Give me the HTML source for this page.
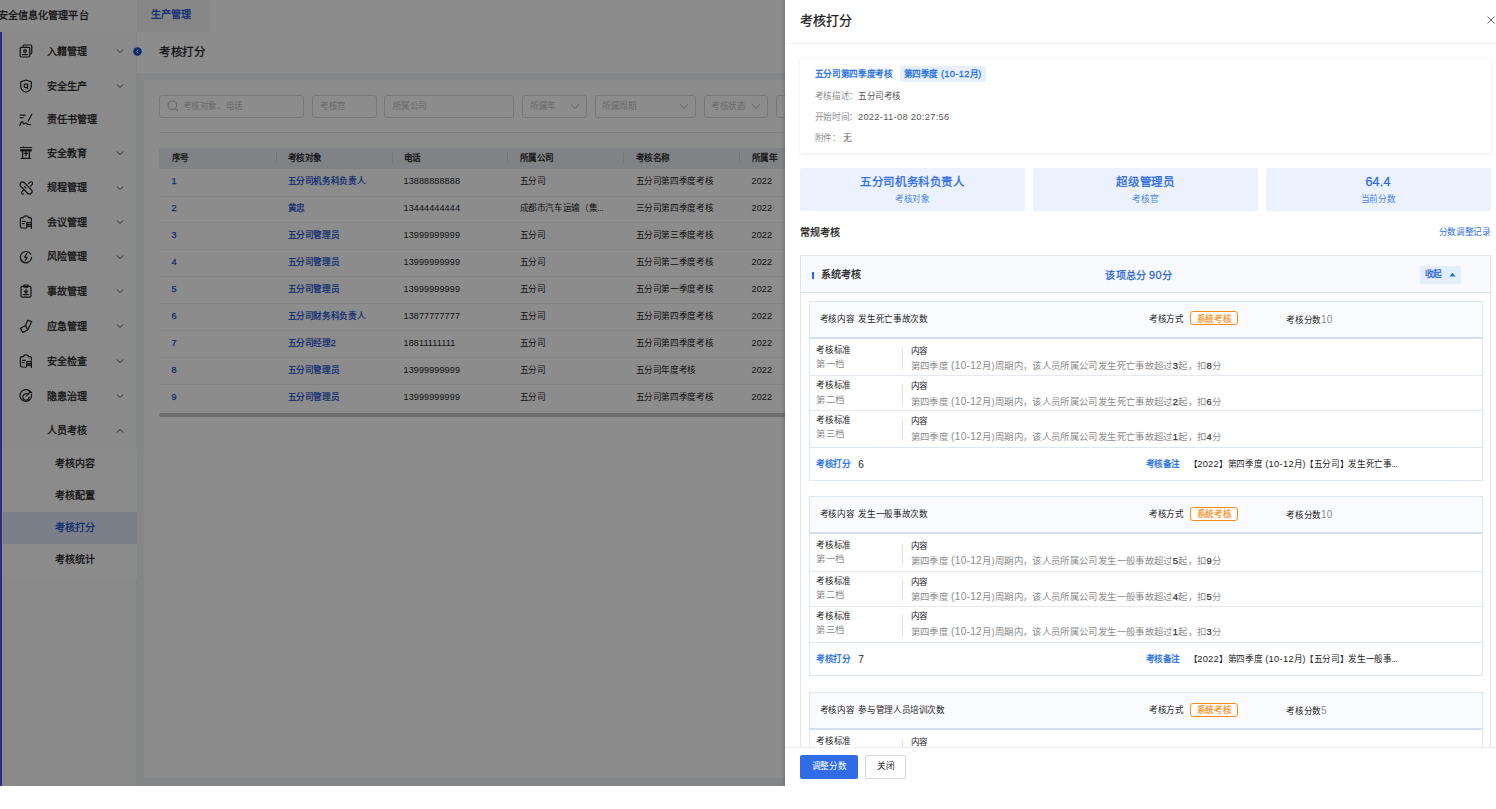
<!DOCTYPE html><html lang="zh-CN"><head><meta charset="utf-8"><style>
*{box-sizing:border-box;margin:0;padding:0}
html,body{width:1496px;height:809px;overflow:hidden;background:#fff;font-family:"Liberation Sans",sans-serif;color:#262626}
.a{position:absolute;white-space:nowrap}
#app{position:absolute;left:0;top:0;width:1496px;height:786px;background:#f0f2f5;overflow:hidden}
.top{left:0;top:0;width:1496px;height:32px;background:#fff;box-shadow:0 1px 2px rgba(0,0,0,.12)}
.logo{left:-2.1px;top:-0.2px;-webkit-text-stroke:0.4px;line-height:32px;font-size:10.08px;letter-spacing:0.08px;font-weight:400;-webkit-text-stroke:0.28px;color:#1f1f1f}
.tab{left:137px;top:0;width:73px;height:32px;background:#f4f4f4}
.tabt{left:151.2px;top:-1px;line-height:32px;color:#1a50d0;font-size:10.08px;letter-spacing:0.08px;font-weight:400;-webkit-text-stroke:0.28px}
.side{left:0;top:32px;width:137px;height:754px;background:#fcfcfc;border-right:1px solid #f0f0f0}
.strip{left:0;top:32px;width:2.4px;height:754px;background:#5252f2}
.mt{font-size:10.08px;letter-spacing:0.08px;color:#1f1f1f;font-weight:400;-webkit-text-stroke:0.28px;line-height:14px}
.sub{left:2.6px;top:448.5px;width:134px;height:130.5px;background:#fefefe}
.sel{left:2.6px;top:512px;width:134px;height:32px;background:#dfe8fa}
.ph{left:137px;top:32px;width:1359px;height:41px;background:#fff}
.ptitle{left:159px;top:44px;font-size:11.52px;letter-spacing:-0.48px;font-weight:400;-webkit-text-stroke:0.28px;color:#1f1f1f;line-height:16px}
.card{left:144px;top:80px;width:1352px;height:698px;background:#fff}
.inp{position:absolute;top:95px;height:23px;border:1px solid #d9d9d9;border-radius:3px;background:#fff}
.ph2{position:absolute;top:100px;font-size:8.64px;letter-spacing:-0.36px;color:#bfbfbf;line-height:13px}
.divl{left:159px;top:132px;width:1337px;height:1px;background:#e8e8e8}
.th{left:159px;top:147.5px;width:1337px;height:21px;background:#e9edf3}
.thc{top:151.5px;line-height:13px;font-size:8.64px;letter-spacing:-0.36px;font-weight:400;-webkit-text-stroke:0.28px;color:#262626}
.thsep{top:153px;width:1px;height:10px;background:#d3d8e0}
.rb{left:159px;width:1337px;height:1px;background:#eeeeee}
.td{line-height:13px;font-size:8.64px;letter-spacing:-0.36px;color:#262626}
.bl{color:#1a50d0;-webkit-text-stroke:0.25px}
.scroll{left:159px;top:412.5px;width:1337px;height:4.5px;background:#c6c6c6;border-radius:3px}
#mask{position:absolute;left:0;top:0;width:1496px;height:786px;background:rgba(0,0,0,.45)}

.bt{font-size:8.64px;letter-spacing:-0.36px;font-weight:400;-webkit-text-stroke:0.28px;color:#1f6fe0;line-height:13px}
.dt{font-size:8.64px;letter-spacing:-0.36px;color:#595959;line-height:13px}
.lb{color:#8c8c8c}
.st{font-size:11.52px;letter-spacing:-0.48px;font-weight:400;-webkit-text-stroke:0.28px;color:#2b6ae3;line-height:16px;text-align:center}
.ss{font-size:8.64px;letter-spacing:-0.36px;color:#4a86e8;line-height:13px;text-align:center}
.dk{font-size:8.64px;letter-spacing:-0.36px;color:#262626;line-height:13px}
.gr{font-size:8.64px;letter-spacing:-0.36px;color:#8c8c8c;line-height:13px}
.l{font-size:1.05em;letter-spacing:0.1px}
#dr .l{font-size:1.08em;letter-spacing:0.3px}
#dr .n{color:#333;-webkit-text-stroke:0.25px}
#dr .n .l{font-size:1em;letter-spacing:0.4px}
#dr{position:absolute;left:785px;top:0;width:711px;height:786px;background:#fff;overflow:hidden}
</style></head><body>
<div id="app">
<div class="a top"></div><div class="a logo">安全信息化管理平台</div><div class="a tab"></div><div class="a tabt">生产管理</div>
<div class="a side"></div><div class="a sub"></div><div class="a sel"></div><div class="a strip"></div>
<div class="a mt" style="left:47px;top:44.8px">入籍管理</div>
<svg class="a" style="left:19.2px;top:44px" width="14" height="14" viewBox="0 0 14 14" fill="none" stroke="#222" stroke-width="1.2" stroke-linecap="round" stroke-linejoin="round"><path d="M4 2.6V2.2C4 1.5 4.5 1 5.2 1H11.6C12.3 1 12.8 1.5 12.8 2.2V8.6C12.8 9.3 12.3 9.8 11.6 9.8H11.2"/><rect x="1.2" y="3.4" width="9.6" height="9.6" rx="1.2"/><circle cx="6" cy="7" r="1.3"/><path d="M3.6 10.6H8.4"/></svg>
<svg class="a" style="left:116px;top:48px" width="8" height="6" viewBox="0 0 8 6"><path d="M1 1.5L4 4.5L7 1.5" fill="none" stroke="#555" stroke-width="1"/></svg>
<div class="a mt" style="left:47px;top:79.8px">安全生产</div>
<svg class="a" style="left:19.2px;top:79px" width="14" height="14" viewBox="0 0 14 14" fill="none" stroke="#222" stroke-width="1.2" stroke-linecap="round" stroke-linejoin="round"><path d="M7 1L12.3 2.9V7.3C12.3 10.2 10 12.2 7 13.2C4 12.2 1.7 10.2 1.7 7.3V2.9Z"/><circle cx="7" cy="6.8" r="1.9"/><path d="M7.6 8.4L8.6 9.6"/></svg>
<svg class="a" style="left:116px;top:83px" width="8" height="6" viewBox="0 0 8 6"><path d="M1 1.5L4 4.5L7 1.5" fill="none" stroke="#555" stroke-width="1"/></svg>
<div class="a mt" style="left:47px;top:113.3px">责任书管理</div>
<svg class="a" style="left:19.2px;top:112.5px" width="14" height="14" viewBox="0 0 14 14" fill="none" stroke="#222" stroke-width="1.2" stroke-linecap="round" stroke-linejoin="round"><path d="M1 2.2H6.2M1.2 4.6H4.2M12.8 1.2L9.2 8.2M0.8 12.6C1.6 10.4 2.6 8.2 3.4 8.8C4.2 9.4 4.2 11.6 5.2 10.8C6.2 10 6.6 9.2 7.4 10.4C8.2 11.6 9 11.8 11.4 11.6"/></svg>
<div class="a mt" style="left:47px;top:146.8px">安全教育</div>
<svg class="a" style="left:19.2px;top:146px" width="14" height="14" viewBox="0 0 14 14" fill="none" stroke="#222" stroke-width="1.2" stroke-linecap="round" stroke-linejoin="round"><path d="M1.2 1.6H12.8M3.6 1.6C3.8 0.6 5.4 0.6 5.6 1.6" stroke-width="1"/><rect x="1.2" y="3.2" width="11.6" height="2.2" fill="#222" stroke="none"/><path d="M3.6 5.4V11M7 5.4V9.6M10.4 5.4V11M5.4 7.4H8.6M2.4 12.4H11.6" stroke-width="1.3"/></svg>
<svg class="a" style="left:116px;top:150px" width="8" height="6" viewBox="0 0 8 6"><path d="M1 1.5L4 4.5L7 1.5" fill="none" stroke="#555" stroke-width="1"/></svg>
<div class="a mt" style="left:47px;top:181.3px">规程管理</div>
<svg class="a" style="left:19.2px;top:180.5px" width="14" height="14" viewBox="0 0 14 14" fill="none" stroke="#222" stroke-width="1.2" stroke-linecap="round" stroke-linejoin="round"><rect x="-0.4" y="4.4" width="14.8" height="5.2" rx="2.6" transform="rotate(45 7 7)"/><path d="M9.6 2.6L10.8 1.4C11.6 0.6 12.6 0.6 13.2 1.2C13.8 1.8 13.8 2.8 13 3.6L11.6 5M4.4 9.2L3.2 10.4C2.4 11.2 2.4 12.2 3 12.8C3.4 13.2 4 13.2 4.6 12.8M5.6 5.6L6.8 6.8"/></svg>
<svg class="a" style="left:116px;top:184.5px" width="8" height="6" viewBox="0 0 8 6"><path d="M1 1.5L4 4.5L7 1.5" fill="none" stroke="#555" stroke-width="1"/></svg>
<div class="a mt" style="left:47px;top:215.8px">会议管理</div>
<svg class="a" style="left:19.2px;top:215px" width="14" height="14" viewBox="0 0 14 14" fill="none" stroke="#222" stroke-width="1.2" stroke-linecap="round" stroke-linejoin="round"><path d="M4.4 2.6H2.8C2 2.6 1.4 3.2 1.4 4V11.6C1.4 12.4 2 13 2.8 13H5.6M4.4 2.6C4.6 1.2 5.6 0.8 7 0.8C8.4 0.8 9.4 1.2 9.6 2.6H11C11.8 2.6 12.4 3.2 12.4 4V6.2M3.6 6.4H6.4M3.6 8.6H5.2M7.8 7.6H12.4V13.4M7.8 7.6V11.2C7.8 12.4 7.4 13 6.8 13.4M7.8 9.6H12.4M7.8 11.4H12.4"/></svg>
<svg class="a" style="left:116px;top:219px" width="8" height="6" viewBox="0 0 8 6"><path d="M1 1.5L4 4.5L7 1.5" fill="none" stroke="#555" stroke-width="1"/></svg>
<div class="a mt" style="left:47px;top:250.3px">风险管理</div>
<svg class="a" style="left:19.2px;top:249.5px" width="14" height="14" viewBox="0 0 14 14" fill="none" stroke="#222" stroke-width="1.2" stroke-linecap="round" stroke-linejoin="round"><path d="M11.8 4.2A5.6 5.6 0 1 0 12.6 7.4M1.6 9.4A5.6 5.6 0 0 0 9 12.4"/><path d="M7.8 3.6L5.6 7.4H8.2L6.2 10.6" stroke-width="1.1"/></svg>
<svg class="a" style="left:116px;top:253.5px" width="8" height="6" viewBox="0 0 8 6"><path d="M1 1.5L4 4.5L7 1.5" fill="none" stroke="#555" stroke-width="1"/></svg>
<div class="a mt" style="left:47px;top:284.8px">事故管理</div>
<svg class="a" style="left:19.2px;top:284px" width="14" height="14" viewBox="0 0 14 14" fill="none" stroke="#222" stroke-width="1.2" stroke-linecap="round" stroke-linejoin="round"><rect x="2" y="2.4" width="10" height="10.8" rx="1.2"/><rect x="4.8" y="1" width="4.4" height="2.2" rx="0.8"/><path d="M7 5.2V8.8M5.2 7.2L7 9L8.8 7.2M4.6 10.6H9.4"/></svg>
<svg class="a" style="left:116px;top:288px" width="8" height="6" viewBox="0 0 8 6"><path d="M1 1.5L4 4.5L7 1.5" fill="none" stroke="#555" stroke-width="1"/></svg>
<div class="a mt" style="left:47px;top:319.8px">应急管理</div>
<svg class="a" style="left:19.2px;top:319px" width="14" height="14" viewBox="0 0 14 14" fill="none" stroke="#222" stroke-width="1.2" stroke-linecap="round" stroke-linejoin="round"><path d="M1.4 9.4L6.4 6.6L8.8 10.8L3.8 13.6Z"/><path d="M6.6 6.6L8.6 1.2L12.8 2.6L8.8 10.4"/></svg>
<svg class="a" style="left:116px;top:323px" width="8" height="6" viewBox="0 0 8 6"><path d="M1 1.5L4 4.5L7 1.5" fill="none" stroke="#555" stroke-width="1"/></svg>
<div class="a mt" style="left:47px;top:354.8px">安全检查</div>
<svg class="a" style="left:19.2px;top:354px" width="14" height="14" viewBox="0 0 14 14" fill="none" stroke="#222" stroke-width="1.2" stroke-linecap="round" stroke-linejoin="round"><path d="M4.4 2.6H2.8C2 2.6 1.4 3.2 1.4 4V11.6C1.4 12.4 2 13 2.8 13H5.6M4.4 2.6C4.6 1.2 5.6 0.8 7 0.8C8.4 0.8 9.4 1.2 9.6 2.6H11C11.8 2.6 12.4 3.2 12.4 4V6.2M3.6 6.4H6.4M3.6 8.6H5.2M7.8 7.6H12.4V13.4M7.8 7.6V11.2C7.8 12.4 7.4 13 6.8 13.4M7.8 9.6H12.4M7.8 11.4H12.4"/></svg>
<svg class="a" style="left:116px;top:358px" width="8" height="6" viewBox="0 0 8 6"><path d="M1 1.5L4 4.5L7 1.5" fill="none" stroke="#555" stroke-width="1"/></svg>
<div class="a mt" style="left:47px;top:389.8px">隐患治理</div>
<svg class="a" style="left:19.2px;top:389px" width="14" height="14" viewBox="0 0 14 14" fill="none" stroke="#222" stroke-width="1.2" stroke-linecap="round" stroke-linejoin="round"><path d="M10.4 2A5.8 5.8 0 1 0 12.4 5.2"/><path d="M9.2 5.6A3.2 3.2 0 1 0 10.2 8"/><path d="M7 7.2L11.8 2.4M10.2 1.4L11 3.2L12.8 3.8"/></svg>
<svg class="a" style="left:116px;top:393px" width="8" height="6" viewBox="0 0 8 6"><path d="M1 1.5L4 4.5L7 1.5" fill="none" stroke="#555" stroke-width="1"/></svg>
<div class="a mt" style="left:47px;top:424px">人员考核</div>
<svg class="a" style="left:116px;top:428px" width="8" height="6" viewBox="0 0 8 6"><path d="M1 4.5L4 1.5L7 4.5" fill="none" stroke="#555" stroke-width="1"/></svg>
<div class="a mt" style="left:54.5px;top:457px;color:#1f1f1f">考核内容</div>
<div class="a mt" style="left:54.5px;top:489px;color:#1f1f1f">考核配置</div>
<div class="a mt" style="left:54.5px;top:521px;color:#1a50d0">考核打分</div>
<div class="a mt" style="left:54.5px;top:553px;color:#1f1f1f">考核统计</div>
<div class="a ph"></div><div class="a ptitle">考核打分</div>
<svg class="a" style="left:132.5px;top:46.8px" width="9" height="9" viewBox="0 0 9 9"><circle cx="4.5" cy="4.5" r="4.3" fill="#1a50d0"/><path d="M5.2 2.8L3.6 4.5L5.2 6.2" fill="none" stroke="#fff" stroke-width="0.9"/></svg>
<div class="a card"></div>
<div class="inp" style="left:159px;width:145px"></div>
<div class="a ph2" style="left:182.5px">考核对象、电话</div>
<div class="inp" style="left:311.5px;width:65.0px"></div>
<div class="a ph2" style="left:320px">考核官</div>
<div class="inp" style="left:384px;width:130px"></div>
<div class="a ph2" style="left:392.5px">所属公司</div>
<div class="inp" style="left:522px;width:64.5px"></div>
<div class="a ph2" style="left:530px">所属年</div>
<svg class="a" style="left:569.5px;top:103px" width="10" height="7" viewBox="0 0 10 7"><path d="M1 1L5 5.5L9 1" fill="none" stroke="#c0c0c0" stroke-width="1"/></svg>
<div class="inp" style="left:594.5px;width:101.0px"></div>
<div class="a ph2" style="left:602px">所属周期</div>
<svg class="a" style="left:678.5px;top:103px" width="10" height="7" viewBox="0 0 10 7"><path d="M1 1L5 5.5L9 1" fill="none" stroke="#c0c0c0" stroke-width="1"/></svg>
<div class="inp" style="left:703.5px;width:64.5px"></div>
<div class="a ph2" style="left:711px">考核状态</div>
<svg class="a" style="left:751px;top:103px" width="10" height="7" viewBox="0 0 10 7"><path d="M1 1L5 5.5L9 1" fill="none" stroke="#c0c0c0" stroke-width="1"/></svg>
<div class="inp" style="left:776px;width:84px"></div>
<svg class="a" style="left:843px;top:103px" width="10" height="7" viewBox="0 0 10 7"><path d="M1 1L5 5.5L9 1" fill="none" stroke="#c0c0c0" stroke-width="1"/></svg>
<svg class="a" style="left:167px;top:100px" width="12" height="12" viewBox="0 0 12 12"><circle cx="5.3" cy="5.3" r="4.3" fill="none" stroke="#bfbfbf" stroke-width="1.1"/><path d="M8.5 8.5L11 11" stroke="#bfbfbf" stroke-width="1.1"/></svg>
<div class="a divl"></div><div class="a th"></div>
<div class="a thc" style="left:171.5px">序号</div>
<div class="a thc" style="left:287.5px">考核对象</div>
<div class="a thc" style="left:403.5px">电话</div>
<div class="a thc" style="left:519.5px">所属公司</div>
<div class="a thc" style="left:635.5px">考核名称</div>
<div class="a thc" style="left:751.5px">所属年</div>
<div class="a thsep" style="left:275.7px"></div>
<div class="a thsep" style="left:391.5px"></div>
<div class="a thsep" style="left:507.3px"></div>
<div class="a thsep" style="left:623.3px"></div>
<div class="a thsep" style="left:739.3px"></div>
<div class="a td bl" style="left:171.5px;top:175.3px"><span class="l">1</span></div>
<div class="a td bl" style="left:287.5px;top:175.3px">五分司机务科负责人</div>
<div class="a td" style="left:403.5px;top:175.3px"><span class="l">13888888888</span></div>
<div class="a td" style="left:519.5px;top:175.3px">五分司</div>
<div class="a td" style="left:635.5px;top:175.3px">五分司第四季度考核</div>
<div class="a td" style="left:751.5px;top:175.3px"><span class="l">2022</span></div>
<div class="a rb" style="top:195.50px"></div>
<div class="a td bl" style="left:171.5px;top:202.2px"><span class="l">2</span></div>
<div class="a td bl" style="left:287.5px;top:202.2px">黄忠</div>
<div class="a td" style="left:403.5px;top:202.2px"><span class="l">13444444444</span></div>
<div class="a td" style="left:519.5px;top:202.2px">成都市汽车运输（集...</div>
<div class="a td" style="left:635.5px;top:202.2px">三分司第四季度考核</div>
<div class="a td" style="left:751.5px;top:202.2px"><span class="l">2022</span></div>
<div class="a rb" style="top:222.44px"></div>
<div class="a td bl" style="left:171.5px;top:229.2px"><span class="l">3</span></div>
<div class="a td bl" style="left:287.5px;top:229.2px">五分司管理员</div>
<div class="a td" style="left:403.5px;top:229.2px"><span class="l">13999999999</span></div>
<div class="a td" style="left:519.5px;top:229.2px">五分司</div>
<div class="a td" style="left:635.5px;top:229.2px">五分司第三季度考核</div>
<div class="a td" style="left:751.5px;top:229.2px"><span class="l">2022</span></div>
<div class="a rb" style="top:249.38px"></div>
<div class="a td bl" style="left:171.5px;top:256.1px"><span class="l">4</span></div>
<div class="a td bl" style="left:287.5px;top:256.1px">五分司管理员</div>
<div class="a td" style="left:403.5px;top:256.1px"><span class="l">13999999999</span></div>
<div class="a td" style="left:519.5px;top:256.1px">五分司</div>
<div class="a td" style="left:635.5px;top:256.1px">五分司第二季度考核</div>
<div class="a td" style="left:751.5px;top:256.1px"><span class="l">2022</span></div>
<div class="a rb" style="top:276.32px"></div>
<div class="a td bl" style="left:171.5px;top:283.1px"><span class="l">5</span></div>
<div class="a td bl" style="left:287.5px;top:283.1px">五分司管理员</div>
<div class="a td" style="left:403.5px;top:283.1px"><span class="l">13999999999</span></div>
<div class="a td" style="left:519.5px;top:283.1px">五分司</div>
<div class="a td" style="left:635.5px;top:283.1px">五分司第一季度考核</div>
<div class="a td" style="left:751.5px;top:283.1px"><span class="l">2022</span></div>
<div class="a rb" style="top:303.26px"></div>
<div class="a td bl" style="left:171.5px;top:310.0px"><span class="l">6</span></div>
<div class="a td bl" style="left:287.5px;top:310.0px">五分司财务科负责人</div>
<div class="a td" style="left:403.5px;top:310.0px"><span class="l">13877777777</span></div>
<div class="a td" style="left:519.5px;top:310.0px">五分司</div>
<div class="a td" style="left:635.5px;top:310.0px">五分司第四季度考核</div>
<div class="a td" style="left:751.5px;top:310.0px"><span class="l">2022</span></div>
<div class="a rb" style="top:330.20px"></div>
<div class="a td bl" style="left:171.5px;top:336.9px"><span class="l">7</span></div>
<div class="a td bl" style="left:287.5px;top:336.9px">五分司经理<span class="l">2</span></div>
<div class="a td" style="left:403.5px;top:336.9px"><span class="l">18811111111</span></div>
<div class="a td" style="left:519.5px;top:336.9px">五分司</div>
<div class="a td" style="left:635.5px;top:336.9px">五分司第四季度考核</div>
<div class="a td" style="left:751.5px;top:336.9px"><span class="l">2022</span></div>
<div class="a rb" style="top:357.14px"></div>
<div class="a td bl" style="left:171.5px;top:363.9px"><span class="l">8</span></div>
<div class="a td bl" style="left:287.5px;top:363.9px">五分司管理员</div>
<div class="a td" style="left:403.5px;top:363.9px"><span class="l">13999999999</span></div>
<div class="a td" style="left:519.5px;top:363.9px">五分司</div>
<div class="a td" style="left:635.5px;top:363.9px">五分司年度考核</div>
<div class="a td" style="left:751.5px;top:363.9px"><span class="l">2022</span></div>
<div class="a rb" style="top:384.08px"></div>
<div class="a td bl" style="left:171.5px;top:390.8px"><span class="l">9</span></div>
<div class="a td bl" style="left:287.5px;top:390.8px">五分司管理员</div>
<div class="a td" style="left:403.5px;top:390.8px"><span class="l">13999999999</span></div>
<div class="a td" style="left:519.5px;top:390.8px">五分司</div>
<div class="a td" style="left:635.5px;top:390.8px">五分司第四季度考核</div>
<div class="a td" style="left:751.5px;top:390.8px"><span class="l">2022</span></div>
<div class="a scroll"></div>
</div>
<div id="mask"></div><div class="a" style="left:781px;top:0;width:4px;height:786px;background:linear-gradient(90deg,rgba(0,0,0,0),rgba(0,0,0,.12))"></div>
<div id="dr">
<div class="a" style="left:15px;top:12px;font-size:12.96px;letter-spacing:-0.04px;font-weight:400;-webkit-text-stroke:0.28px;color:#1f1f1f;line-height:17px">考核打分</div>
<svg class="a" style="left:701.5999999999999px;top:16px" width="8" height="8" viewBox="0 0 8 8"><path d="M0.5 0.5L7.6 7.6M7.6 0.5L0.5 7.6" stroke="#666" stroke-width="1"/></svg>
<div class="a" style="left:0;top:43px;width:711px;height:1px;background:#f0f0f0"></div>
<div class="a" style="left:14.600000000000023px;top:59.3px;width:691px;height:93.7px;background:#fff;box-shadow:0 1px 4px rgba(0,0,0,.09);border-radius:2px"></div>
<div class="a bt" style="left:29.700000000000045px;top:67.7px">五分司第四季度考核</div>
<div class="a" style="left:115px;top:66.4px;width:86px;height:16px;background:#e6f0fc;border-radius:2px"></div>
<div class="a bt" style="left:118.5px;top:67.7px">第四季度<span class="l"> (10-12</span>月)</div>
<div class="a dt" style="left:29.700000000000045px;top:90.3px"><span class="lb">考核描述：</span>五分司考核</div>
<div class="a dt" style="left:29.700000000000045px;top:110.7px"><span class="lb">开始时间：</span><span class="l">2022-11-08 20:27:56</span></div>
<div class="a dt" style="left:29.700000000000045px;top:132.2px"><span class="lb">附件：</span> 无</div>
<div class="a" style="left:14.600000000000023px;top:167.8px;width:225.39999999999998px;height:43px;background:#ebf2fd;border-radius:2px"></div>
<div class="a st" style="left:14.600000000000023px;top:173.7px;width:225.39999999999998px">五分司机务科负责人</div>
<div class="a ss" style="left:14.600000000000023px;top:192.5px;width:225.39999999999998px">考核对象</div>
<div class="a" style="left:247.79999999999995px;top:167.8px;width:225.0px;height:43px;background:#ebf2fd;border-radius:2px"></div>
<div class="a st" style="left:247.79999999999995px;top:173.7px;width:225.0px">超级管理员</div>
<div class="a ss" style="left:247.79999999999995px;top:192.5px;width:225.0px">考核官</div>
<div class="a" style="left:480.5999999999999px;top:167.8px;width:225.0px;height:43px;background:#ebf2fd;border-radius:2px"></div>
<div class="a st" style="left:480.5999999999999px;top:173.7px;width:225.0px"><span class="l">64.4</span></div>
<div class="a ss" style="left:480.5999999999999px;top:192.5px;width:225.0px">当前分数</div>
<div class="a" style="left:15px;top:225.7px;font-size:10.08px;letter-spacing:0.08px;font-weight:400;-webkit-text-stroke:0.28px;color:#1f1f1f;line-height:14px">常规考核</div>
<div class="a" style="left:605px;top:226.2px;width:100.5px;text-align:right;font-size:8.64px;letter-spacing:-0.36px;color:#2f6fe0;line-height:13px">分数调整记录</div>
<div class="a" style="left:15px;top:255px;width:690.5px;height:560px;border:1px solid #e2e4e8;background:#fff"></div>
<div class="a" style="left:16px;top:256px;width:688.5px;height:36.5px;background:#f8fafd;border-bottom:1px solid #d7e1f0"></div>
<div class="a" style="left:27px;top:272px;width:2px;height:7px;background:#1a6fe0"></div>
<div class="a" style="left:35.700000000000045px;top:267.8px;font-size:10.08px;letter-spacing:0.08px;font-weight:400;-webkit-text-stroke:0.28px;color:#1f1f1f;line-height:14px">系统考核</div>
<div class="a" style="left:253.70000000000005px;top:267.8px;width:200px;text-align:center;font-size:10.08px;letter-spacing:0.08px;font-weight:400;-webkit-text-stroke:0.28px;color:#2a64d8;line-height:14px">该项总分<span class="l"> 90</span>分</div>
<div class="a" style="left:635.3px;top:265.6px;width:40.6px;height:18px;background:#e3eefb;border-radius:2px"></div>
<div class="a" style="left:639.5px;top:268.0px;font-size:8.64px;letter-spacing:-0.36px;font-weight:400;-webkit-text-stroke:0.28px;color:#2a64d8;line-height:13px">收起</div>
<svg class="a" style="left:663.8px;top:271.5px" width="7" height="5" viewBox="0 0 7 5"><path d="M0.5 4.5L3.5 0.8L6.5 4.5Z" fill="#1a6fe0"/></svg>
<div class="a" style="left:23.5px;top:301px;width:674.0999999999999px;height:180px;border:1px solid #dde6f3;background:#fff"></div>
<div class="a" style="left:24.5px;top:302px;width:672.0999999999999px;height:36.69999999999999px;background:#f9fbfe;border-bottom:2px solid #d3def0"></div>
<div class="a dk" style="left:34.700000000000045px;top:313.1px">考核内容&nbsp;&nbsp;发生死亡事故次数</div>
<div class="a dk" style="left:364.0999999999999px;top:312.9px">考核方式</div>
<div class="a" style="left:405.0999999999999px;top:311.4px;width:47.5px;height:14px;border:1px solid #fa8c16;border-radius:3px;background:#fff"></div>
<div class="a" style="left:411.79999999999995px;top:312.9px;font-size:8.64px;letter-spacing:-0.36px;color:#fa8c16;line-height:13px;-webkit-text-stroke:0.2px">系统考核</div>
<div class="a dk" style="left:501.4000000000001px;top:312.9px">考核分数<span style="color:#8c8c8c;font-size:9.3px;letter-spacing:0.30px"><span class="l">10</span></span></div>
<div class="a dk" style="left:31.299999999999955px;top:343.7px">考核标准</div>
<div class="a gr" style="left:31.299999999999955px;top:357.9px;font-size:9.36px;letter-spacing:0.36px">第一档</div>
<div class="a" style="left:117px;top:348.3px;width:1px;height:21.6px;background:#e0e0e0"></div>
<div class="a dk" style="left:125.5px;top:344.59999999999997px">内容</div>
<div class="a gr" style="left:125.5px;top:359.09999999999997px;font-size:9.36px;letter-spacing:0.36px">第四季度<span class="l"> (10-12</span>月)周期内，该人员所属公司发生死亡事故超过<span class="n"><span class="l">3</span></span>起，扣<span class="n"><span class="l">8</span></span>分</div>
<div class="a" style="left:24.5px;top:375.4px;width:672.0999999999999px;height:1px;background:#e6e9ef"></div>
<div class="a dk" style="left:31.299999999999955px;top:379.4px">考核标准</div>
<div class="a gr" style="left:31.299999999999955px;top:393.59999999999997px;font-size:9.36px;letter-spacing:0.36px">第二档</div>
<div class="a" style="left:117px;top:384.0px;width:1px;height:21.6px;background:#e0e0e0"></div>
<div class="a dk" style="left:125.5px;top:380.29999999999995px">内容</div>
<div class="a gr" style="left:125.5px;top:394.79999999999995px;font-size:9.36px;letter-spacing:0.36px">第四季度<span class="l"> (10-12</span>月)周期内，该人员所属公司发生死亡事故超过<span class="n"><span class="l">2</span></span>起，扣<span class="n"><span class="l">6</span></span>分</div>
<div class="a" style="left:24.5px;top:410.2px;width:672.0999999999999px;height:1px;background:#e6e9ef"></div>
<div class="a dk" style="left:31.299999999999955px;top:414.2px">考核标准</div>
<div class="a gr" style="left:31.299999999999955px;top:428.4px;font-size:9.36px;letter-spacing:0.36px">第三档</div>
<div class="a" style="left:117px;top:418.8px;width:1px;height:21.6px;background:#e0e0e0"></div>
<div class="a dk" style="left:125.5px;top:415.09999999999997px">内容</div>
<div class="a gr" style="left:125.5px;top:429.59999999999997px;font-size:9.36px;letter-spacing:0.36px">第四季度<span class="l"> (10-12</span>月)周期内，该人员所属公司发生死亡事故超过<span class="n"><span class="l">1</span></span>起，扣<span class="n"><span class="l">4</span></span>分</div>
<div class="a" style="left:24.5px;top:446.5px;width:672.0999999999999px;height:1px;background:#dfe7f3"></div>
<div class="a bt" style="left:31px;top:457.7px">考核打分</div>
<div class="a dk" style="left:73.20000000000005px;top:457.7px;font-size:9.3px;letter-spacing:0.30px"><span class="l">6</span></div>
<div class="a bt" style="left:360.5px;top:457.7px">考核备注</div>
<div class="a dk" style="left:403.5px;top:457.7px">【<span class="l">2022</span>】第四季度<span class="l"> (10-12</span>月)【五分司】发生死亡事...</div>
<div class="a" style="left:23.5px;top:496.3px;width:674.0999999999999px;height:180px;border:1px solid #dde6f3;background:#fff"></div>
<div class="a" style="left:24.5px;top:497.3px;width:672.0999999999999px;height:36.69999999999999px;background:#f9fbfe;border-bottom:2px solid #d3def0"></div>
<div class="a dk" style="left:34.700000000000045px;top:508.4px">考核内容&nbsp;&nbsp;发生一般事故次数</div>
<div class="a dk" style="left:364.0999999999999px;top:508.20000000000005px">考核方式</div>
<div class="a" style="left:405.0999999999999px;top:506.7px;width:47.5px;height:14px;border:1px solid #fa8c16;border-radius:3px;background:#fff"></div>
<div class="a" style="left:411.79999999999995px;top:508.20000000000005px;font-size:8.64px;letter-spacing:-0.36px;color:#fa8c16;line-height:13px;-webkit-text-stroke:0.2px">系统考核</div>
<div class="a dk" style="left:501.4000000000001px;top:508.20000000000005px">考核分数<span style="color:#8c8c8c;font-size:9.3px;letter-spacing:0.30px"><span class="l">10</span></span></div>
<div class="a dk" style="left:31.299999999999955px;top:539.0px">考核标准</div>
<div class="a gr" style="left:31.299999999999955px;top:553.2px;font-size:9.36px;letter-spacing:0.36px">第一档</div>
<div class="a" style="left:117px;top:543.6px;width:1px;height:21.6px;background:#e0e0e0"></div>
<div class="a dk" style="left:125.5px;top:539.9px">内容</div>
<div class="a gr" style="left:125.5px;top:554.4px;font-size:9.36px;letter-spacing:0.36px">第四季度<span class="l"> (10-12</span>月)周期内，该人员所属公司发生一般事故超过<span class="n"><span class="l">5</span></span>起，扣<span class="n"><span class="l">9</span></span>分</div>
<div class="a" style="left:24.5px;top:570.7px;width:672.0999999999999px;height:1px;background:#e6e9ef"></div>
<div class="a dk" style="left:31.299999999999955px;top:574.7px">考核标准</div>
<div class="a gr" style="left:31.299999999999955px;top:588.9000000000001px;font-size:9.36px;letter-spacing:0.36px">第二档</div>
<div class="a" style="left:117px;top:579.3000000000001px;width:1px;height:21.6px;background:#e0e0e0"></div>
<div class="a dk" style="left:125.5px;top:575.6px">内容</div>
<div class="a gr" style="left:125.5px;top:590.1px;font-size:9.36px;letter-spacing:0.36px">第四季度<span class="l"> (10-12</span>月)周期内，该人员所属公司发生一般事故超过<span class="n"><span class="l">4</span></span>起，扣<span class="n"><span class="l">5</span></span>分</div>
<div class="a" style="left:24.5px;top:605.5px;width:672.0999999999999px;height:1px;background:#e6e9ef"></div>
<div class="a dk" style="left:31.299999999999955px;top:609.5px">考核标准</div>
<div class="a gr" style="left:31.299999999999955px;top:623.7px;font-size:9.36px;letter-spacing:0.36px">第三档</div>
<div class="a" style="left:117px;top:614.1px;width:1px;height:21.6px;background:#e0e0e0"></div>
<div class="a dk" style="left:125.5px;top:610.4px">内容</div>
<div class="a gr" style="left:125.5px;top:624.9px;font-size:9.36px;letter-spacing:0.36px">第四季度<span class="l"> (10-12</span>月)周期内，该人员所属公司发生一般事故超过<span class="n"><span class="l">1</span></span>起，扣<span class="n"><span class="l">3</span></span>分</div>
<div class="a" style="left:24.5px;top:641.8px;width:672.0999999999999px;height:1px;background:#dfe7f3"></div>
<div class="a bt" style="left:31px;top:653.0px">考核打分</div>
<div class="a dk" style="left:73.20000000000005px;top:653.0px;font-size:9.3px;letter-spacing:0.30px"><span class="l">7</span></div>
<div class="a bt" style="left:360.5px;top:653.0px">考核备注</div>
<div class="a dk" style="left:403.5px;top:653.0px">【<span class="l">2022</span>】第四季度<span class="l"> (10-12</span>月)【五分司】发生一般事...</div>
<div class="a" style="left:23.5px;top:692.3px;width:674.0999999999999px;height:180px;border:1px solid #dde6f3;background:#fff"></div>
<div class="a" style="left:24.5px;top:693.3px;width:672.0999999999999px;height:36.700000000000045px;background:#f9fbfe;border-bottom:2px solid #d3def0"></div>
<div class="a dk" style="left:34.700000000000045px;top:704.4px">考核内容&nbsp;&nbsp;参与管理人员培训次数</div>
<div class="a dk" style="left:364.0999999999999px;top:704.1999999999999px">考核方式</div>
<div class="a" style="left:405.0999999999999px;top:702.6999999999999px;width:47.5px;height:14px;border:1px solid #fa8c16;border-radius:3px;background:#fff"></div>
<div class="a" style="left:411.79999999999995px;top:704.1999999999999px;font-size:8.64px;letter-spacing:-0.36px;color:#fa8c16;line-height:13px;-webkit-text-stroke:0.2px">系统考核</div>
<div class="a dk" style="left:501.4000000000001px;top:704.1999999999999px">考核分数<span style="color:#8c8c8c;font-size:9.3px;letter-spacing:0.30px"><span class="l">5</span></span></div>
<div class="a dk" style="left:31.299999999999955px;top:735.0px">考核标准</div>
<div class="a gr" style="left:31.299999999999955px;top:749.2px;font-size:9.36px;letter-spacing:0.36px">第一档</div>
<div class="a" style="left:117px;top:739.6px;width:1px;height:21.6px;background:#e0e0e0"></div>
<div class="a dk" style="left:125.5px;top:735.9px">内容</div>
<div class="a gr" style="left:125.5px;top:750.4px;font-size:9.36px;letter-spacing:0.36px">第四季度<span class="l"> (10-12</span>月)周期内，该人员所属公司参与培训少于<span class="n"><span class="l">1</span></span>次，扣<span class="n"><span class="l">5</span></span>分</div>
<div class="a" style="left:24.5px;top:766.6999999999999px;width:672.0999999999999px;height:1px;background:#e6e9ef"></div>
<div class="a dk" style="left:31.299999999999955px;top:770.6999999999999px">考核标准</div>
<div class="a gr" style="left:31.299999999999955px;top:784.9px;font-size:9.36px;letter-spacing:0.36px">第二档</div>
<div class="a" style="left:117px;top:775.3px;width:1px;height:21.6px;background:#e0e0e0"></div>
<div class="a dk" style="left:125.5px;top:771.5999999999999px">内容</div>
<div class="a gr" style="left:125.5px;top:786.0999999999999px;font-size:9.36px;letter-spacing:0.36px">第四季度<span class="l"> (10-12</span>月)周期内，该人员所属公司</div>
<div class="a" style="left:24.5px;top:801.5px;width:672.0999999999999px;height:1px;background:#e6e9ef"></div>
<div class="a dk" style="left:31.299999999999955px;top:805.5px">考核标准</div>
<div class="a gr" style="left:31.299999999999955px;top:819.7px;font-size:9.36px;letter-spacing:0.36px">第三档</div>
<div class="a" style="left:117px;top:810.1px;width:1px;height:21.6px;background:#e0e0e0"></div>
<div class="a dk" style="left:125.5px;top:806.4px">内容</div>
<div class="a gr" style="left:125.5px;top:820.9px;font-size:9.36px;letter-spacing:0.36px">第四季度<span class="l"> (10-12</span>月)周期内，该人员所属公司</div>
<div class="a" style="left:24.5px;top:837.8px;width:672.0999999999999px;height:1px;background:#dfe7f3"></div>
<div class="a bt" style="left:31px;top:849.0px">考核打分</div>
<div class="a dk" style="left:73.20000000000005px;top:849.0px;font-size:9.3px;letter-spacing:0.30px"><span class="l">5</span></div>
<div class="a bt" style="left:360.5px;top:849.0px">考核备注</div>
<div class="a dk" style="left:403.5px;top:849.0px"></div>
<div class="a" style="left:0;top:747px;width:711px;height:39px;background:#fff;border-top:1px solid #eeeeee"></div>
<div class="a" style="left:15px;top:755.2px;width:57.8px;height:23.5px;background:#2f6ce6;border-radius:2px;color:#fff;font-size:8.64px;letter-spacing:-0.36px;line-height:23.5px;text-align:center">调整分数</div>
<div class="a" style="left:80.29999999999995px;top:755.2px;width:40.5px;height:23.5px;background:#fff;border:1px solid #d9d9d9;border-radius:2px;color:#262626;font-size:8.64px;letter-spacing:-0.36px;line-height:21.5px;text-align:center">关闭</div>
</div>
</body></html>
